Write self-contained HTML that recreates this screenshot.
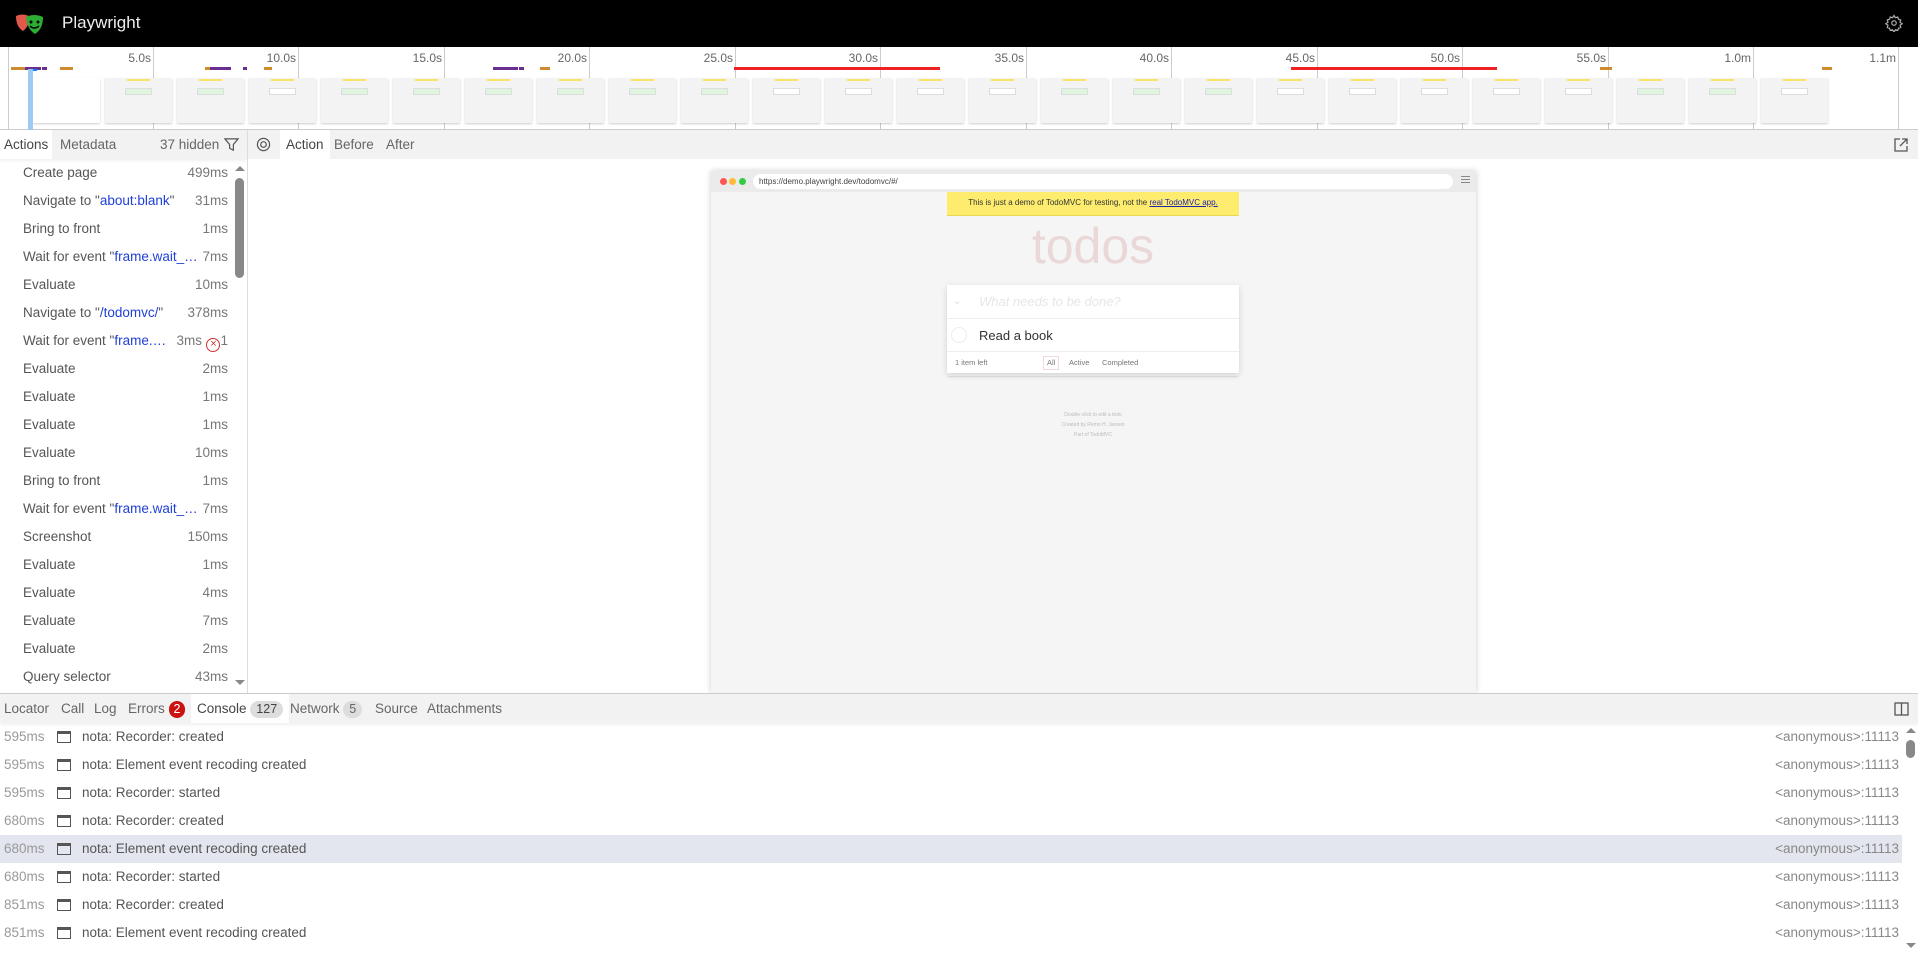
<!DOCTYPE html>
<html><head><meta charset="utf-8"><style>
*{box-sizing:border-box;margin:0;padding:0}
body{width:1918px;height:955px;overflow:hidden;font-family:"Liberation Sans",sans-serif;font-size:13.5px;color:#555;background:#fff;position:relative}
.abs{position:absolute}
#hdr{left:0;top:0;width:1918px;height:47px;background:#000}
#hdr .t{left:62px;top:13px;color:#eee;font-size:17px}
#tl{left:0;top:47px;width:1918px;height:83px;background:#fff;border-bottom:1px solid #ccc}
.tick{top:0;width:1px;height:83px;background:#ccc}
.lbl{top:4px;font-size:12px;color:#666;text-align:right;width:60px}
.bar{height:3px;top:20px}
.th{top:31px;width:67px;height:45px;background:#f3f3f3;box-shadow:0 1px 2px rgba(0,0,0,.2)}
.th i{position:absolute;left:22px;top:1px;width:23px;height:2px;background:#f5e36a}
.th b{position:absolute;left:20px;top:10px;width:27px;height:7px;background:#fff;border:1px solid #ddd}
.tabbar{background:#f2f2f2}
.tab{position:absolute;top:0;height:100%;padding:0 6px;line-height:29px;color:#666}
.tab.sel{background:#fff;color:#444}
.row{position:absolute;left:0;height:28px;line-height:28px;white-space:nowrap}
.row .n{position:absolute;left:23px;color:#555}
.row .d{position:absolute;right:0;color:#777;text-align:right}
.blue{color:#1f3fd9}
.crow{position:absolute;left:0;width:1902px;height:28px;line-height:28px;color:#555}
.crow .ts{position:absolute;left:4px;color:#999}
.crow .ic{position:absolute;left:57px;top:8px;width:14px;height:12px;border:1.5px solid #555;border-top-width:3px}
.crow .m{position:absolute;left:82px}
.crow .s{position:absolute;right:3px;color:#888}
.badge{display:inline-block;border-radius:9px;padding:0 6px;line-height:17px;font-size:12.5px}
</style></head><body>
<div id="hdr" class="abs">
<svg class="abs" style="left:14px;top:12px" width="32" height="24" viewBox="0 0 32 24"><path d="M2 4 Q8 1 15 4 Q16 14 9 19 Q2 15 2 4Z" fill="#e2574c"/><path d="M12 5 Q20 1 29 5 Q29 17 21 22 Q13 17 12 5Z" fill="#2ead33"/><circle cx="17" cy="10" r="1.5" fill="#000"/><circle cx="24" cy="10" r="1.5" fill="#000"/><path d="M16 14 Q20 18 25 14" stroke="#000" stroke-width="1.5" fill="none"/></svg>
<div class="abs t">Playwright</div>
<svg class="abs" style="left:1885px;top:14px" width="18" height="18" viewBox="0 0 24 24" fill="none" stroke="#aaa" stroke-width="1.6"><circle cx="12" cy="12" r="3"/><path d="M12 2l2 3 3-1 1 3 3 1-1 3 3 2-3 2 1 3-3 1-1 3-3-1-2 3-2-3-3 1-1-3-3-1 1-3-3-2 3-2-1-3 3-1 1-3 3 1z"/></svg>
</div>
<div id="tl" class="abs">
<div class="abs tick" style="left:8px"></div>
<div class="abs tick" style="left:153px"></div><div class="abs lbl" style="left:91px">5.0s</div>
<div class="abs tick" style="left:298px"></div><div class="abs lbl" style="left:236px">10.0s</div>
<div class="abs tick" style="left:444px"></div><div class="abs lbl" style="left:382px">15.0s</div>
<div class="abs tick" style="left:589px"></div><div class="abs lbl" style="left:527px">20.0s</div>
<div class="abs tick" style="left:735px"></div><div class="abs lbl" style="left:673px">25.0s</div>
<div class="abs tick" style="left:880px"></div><div class="abs lbl" style="left:818px">30.0s</div>
<div class="abs tick" style="left:1026px"></div><div class="abs lbl" style="left:964px">35.0s</div>
<div class="abs tick" style="left:1171px"></div><div class="abs lbl" style="left:1109px">40.0s</div>
<div class="abs tick" style="left:1317px"></div><div class="abs lbl" style="left:1255px">45.0s</div>
<div class="abs tick" style="left:1462px"></div><div class="abs lbl" style="left:1400px">50.0s</div>
<div class="abs tick" style="left:1608px"></div><div class="abs lbl" style="left:1546px">55.0s</div>
<div class="abs tick" style="left:1753px"></div><div class="abs lbl" style="left:1691px">1.0m</div>
<div class="abs tick" style="left:1898px"></div><div class="abs lbl" style="left:1836px">1.1m</div>
<div class="abs bar" style="left:11px;width:14px;background:#d08a2e"></div>
<div class="abs bar" style="left:25px;width:16px;background:#6b2f8f"></div>
<div class="abs bar" style="left:42px;width:5px;background:#6b2f8f"></div>
<div class="abs bar" style="left:60px;width:13px;background:#d08a2e"></div>
<div class="abs bar" style="left:205px;width:5px;background:#d08a2e"></div>
<div class="abs bar" style="left:210px;width:21px;background:#6b2f8f"></div>
<div class="abs bar" style="left:243px;width:4px;background:#6b2f8f"></div>
<div class="abs bar" style="left:264px;width:8px;background:#d08a2e"></div>
<div class="abs bar" style="left:493px;width:25px;background:#6b2f8f"></div>
<div class="abs bar" style="left:519px;width:5px;background:#6b2f8f"></div>
<div class="abs bar" style="left:540px;width:10px;background:#d08a2e"></div>
<div class="abs bar" style="left:734px;width:206px;background:#e22"></div>
<div class="abs bar" style="left:1291px;width:206px;background:#e22"></div>
<div class="abs bar" style="left:1600px;width:12px;background:#d08a2e"></div>
<div class="abs bar" style="left:1822px;width:10px;background:#d08a2e"></div>
<div class="abs" style="left:30px;top:22px;width:7px;height:2px;background:#0a84ff"></div>
<div class="abs" style="left:33px;top:31px;width:67px;height:45px;background:#fff;box-shadow:0 1px 2px rgba(0,0,0,.2)"></div>
<div class="abs" style="left:28px;top:22px;width:5px;height:61px;background:#9ccaf5"></div>
<div class="abs th" style="left:105px"><i></i><b style="background:#dff5df"></b></div>
<div class="abs th" style="left:177px"><i></i><b style="background:#dff5df"></b></div>
<div class="abs th" style="left:249px"><i></i><b></b></div>
<div class="abs th" style="left:321px"><i></i><b style="background:#dff5df"></b></div>
<div class="abs th" style="left:393px"><i></i><b style="background:#dff5df"></b></div>
<div class="abs th" style="left:465px"><i></i><b style="background:#dff5df"></b></div>
<div class="abs th" style="left:537px"><i></i><b style="background:#dff5df"></b></div>
<div class="abs th" style="left:609px"><i></i><b style="background:#dff5df"></b></div>
<div class="abs th" style="left:681px"><i></i><b style="background:#dff5df"></b></div>
<div class="abs th" style="left:753px"><i></i><b></b></div>
<div class="abs th" style="left:825px"><i></i><b></b></div>
<div class="abs th" style="left:897px"><i></i><b></b></div>
<div class="abs th" style="left:969px"><i></i><b></b></div>
<div class="abs th" style="left:1041px"><i></i><b style="background:#dff5df"></b></div>
<div class="abs th" style="left:1113px"><i></i><b style="background:#dff5df"></b></div>
<div class="abs th" style="left:1185px"><i></i><b style="background:#dff5df"></b></div>
<div class="abs th" style="left:1257px"><i></i><b></b></div>
<div class="abs th" style="left:1329px"><i></i><b></b></div>
<div class="abs th" style="left:1401px"><i></i><b></b></div>
<div class="abs th" style="left:1473px"><i></i><b></b></div>
<div class="abs th" style="left:1545px"><i></i><b></b></div>
<div class="abs th" style="left:1617px"><i></i><b style="background:#dff5df"></b></div>
<div class="abs th" style="left:1689px"><i></i><b style="background:#dff5df"></b></div>
<div class="abs th" style="left:1761px"><i></i><b></b></div>
</div>
<div class="abs tabbar" style="left:0;top:130px;width:247px;height:29px;box-shadow:0 2px 3px rgba(0,0,0,.06)">
<div class="tab sel" style="left:0;padding:0 4px">Actions</div>
<div class="tab" style="left:54px">Metadata</div>
<div class="tab" style="left:154px">37 hidden</div>
<svg class="abs" style="left:224px;top:7px" width="15" height="15" viewBox="0 0 16 16" fill="none" stroke="#555" stroke-width="1.3"><path d="M1 2h14L10 8v6L6 12V8z"/></svg>
</div>
<div class="abs" style="left:247px;top:130px;width:1px;height:563px;background:#ddd"></div>
<div class="abs" style="left:0;top:159px;width:228px;height:534px">
<div class="row" style="top:0;width:228px"><span class="n">Create page</span><span class="d">499ms</span></div>
<div class="row" style="top:28px;width:228px"><span class="n">Navigate to "<span class="blue">about:blank</span>"</span><span class="d">31ms</span></div>
<div class="row" style="top:56px;width:228px"><span class="n">Bring to front</span><span class="d">1ms</span></div>
<div class="row" style="top:84px;width:228px"><span class="n">Wait for event "<span class="blue">frame.wait_…</span></span><span class="d">7ms</span></div>
<div class="row" style="top:112px;width:228px"><span class="n">Evaluate</span><span class="d">10ms</span></div>
<div class="row" style="top:140px;width:228px"><span class="n">Navigate to "<span class="blue">/todomvc/</span>"</span><span class="d">378ms</span></div>
<div class="row" style="top:168px;width:228px"><span class="n">Wait for event "<span class="blue">frame.…</span></span><span class="d" style="right:26px">3ms</span><span class="d"><span style="display:inline-block;width:14px;height:14px;border:1.5px solid #c33;border-radius:50%;color:#c33;font-size:11px;line-height:11px;text-align:center;vertical-align:-2px">×</span>1</span></div>
<div class="row" style="top:196px;width:228px"><span class="n">Evaluate</span><span class="d">2ms</span></div>
<div class="row" style="top:224px;width:228px"><span class="n">Evaluate</span><span class="d">1ms</span></div>
<div class="row" style="top:252px;width:228px"><span class="n">Evaluate</span><span class="d">1ms</span></div>
<div class="row" style="top:280px;width:228px"><span class="n">Evaluate</span><span class="d">10ms</span></div>
<div class="row" style="top:308px;width:228px"><span class="n">Bring to front</span><span class="d">1ms</span></div>
<div class="row" style="top:336px;width:228px"><span class="n">Wait for event "<span class="blue">frame.wait_…</span></span><span class="d">7ms</span></div>
<div class="row" style="top:364px;width:228px"><span class="n">Screenshot</span><span class="d">150ms</span></div>
<div class="row" style="top:392px;width:228px"><span class="n">Evaluate</span><span class="d">1ms</span></div>
<div class="row" style="top:420px;width:228px"><span class="n">Evaluate</span><span class="d">4ms</span></div>
<div class="row" style="top:448px;width:228px"><span class="n">Evaluate</span><span class="d">7ms</span></div>
<div class="row" style="top:476px;width:228px"><span class="n">Evaluate</span><span class="d">2ms</span></div>
<div class="row" style="top:504px;width:228px"><span class="n">Query selector</span><span class="d">43ms</span></div>
</div>
<div class="abs" style="left:235px;top:166px;width:0;height:0;border:5px solid transparent;border-bottom-color:#888;border-top:0"></div>
<div class="abs" style="left:235px;top:178px;width:9px;height:100px;background:#888;border-radius:5px"></div>
<div class="abs" style="left:235px;top:680px;width:0;height:0;border:5px solid transparent;border-top-color:#888;border-bottom:0"></div>
<div class="abs tabbar" style="left:248px;top:130px;width:1670px;height:29px">
<svg class="abs" style="left:8px;top:7px" width="15" height="15" viewBox="0 0 16 16" fill="none" stroke="#555" stroke-width="1.3"><circle cx="8" cy="8" r="6.5"/><circle cx="8" cy="8" r="3"/></svg>
<div class="tab sel" style="left:32px">Action</div>
<div class="tab" style="left:80px">Before</div>
<div class="tab" style="left:132px">After</div>
<svg class="abs" style="left:1645px;top:7px" width="16" height="16" viewBox="0 0 16 16" fill="none" stroke="#555" stroke-width="1.3"><path d="M7 2H2v12h12V9M9 2h5v5M14 2L7 9"/></svg>
</div>
<div class="abs" style="left:711px;top:171px;width:765px;height:522px;background:#f5f5f5;box-shadow:0 0 6px rgba(0,0,0,.2)">
<div class="abs" style="left:0;top:0;width:765px;height:21px;background:#ebebeb"></div>
<div class="abs" style="left:9px;top:7px;width:7px;height:7px;border-radius:50%;background:#f55"></div>
<div class="abs" style="left:18px;top:7px;width:7px;height:7px;border-radius:50%;background:#fb3"></div>
<div class="abs" style="left:28px;top:7px;width:7px;height:7px;border-radius:50%;background:#3c4"></div>
<div class="abs" style="left:42px;top:3px;width:700px;height:15px;background:#fff;border-radius:8px;font-size:8px;line-height:15px;padding-left:6px;color:#444">https://demo.playwright.dev/todomvc/#/</div>
<div class="abs" style="left:750px;top:5px;width:9px;height:1px;background:#888;box-shadow:0 3px #888,0 6px #888"></div>
<div class="abs" style="left:236px;top:21px;width:292px;height:24px;background:#fdec6e;border-bottom:1px solid #e8d750;font-size:8px;text-align:center;line-height:22px;color:#333">This is just a demo of TodoMVC for testing, not the <u style="color:#22a">real TodoMVC app.</u></div>
<div class="abs" style="left:236px;top:46px;width:292px;text-align:center;font-size:50px;color:#ead7d7;font-weight:100">todos</div>
<div class="abs" style="left:236px;top:114px;width:292px;height:88px;background:#fff;box-shadow:0 2px 6px rgba(0,0,0,.15),0 4px 0 -1px #f6f6f6,0 5px 1px -1px #ddd">
<div class="abs" style="left:0;top:0;width:292px;height:34px;border-bottom:1px solid #eee;font-size:13px;font-style:italic;color:#e6e6e6;line-height:34px;padding-left:32px">What needs to be done?</div>
<div class="abs" style="left:6px;top:11px;color:#ddd;font-size:10px">⌄</div>
<div class="abs" style="left:4px;top:42px;width:16px;height:16px;border:1px solid #eee;border-radius:50%"></div>
<div class="abs" style="left:32px;top:35px;font-size:13px;color:#333;line-height:31px">Read a book</div>
<div class="abs" style="left:0;top:66px;width:292px;height:22px;border-top:1px solid #eee;font-size:7.5px;color:#777;line-height:21px">
<span class="abs" style="left:8px">1 item left</span><span class="abs" style="left:96px;top:4px;line-height:12px;padding:0 3px;border:1px solid #f3d9d9">All</span><span class="abs" style="left:122px">Active</span><span class="abs" style="left:155px">Completed</span></div>
</div>
<div class="abs" style="left:236px;top:239px;width:292px;text-align:center;font-size:5px;color:#bbb;line-height:10px">Double-click to edit a todo<br>Created by Remo H. Jansen<br>Part of TodoMVC</div>
</div>
<div class="abs tabbar" style="left:0;top:693px;width:1918px;height:30px;border-top:1px solid #ccc;box-shadow:0 2px 3px rgba(0,0,0,.06)">
<div class="tab" style="left:0;padding:0 4px">Locator</div>
<div class="tab" style="left:55px">Call</div>
<div class="tab" style="left:88px">Log</div>
<div class="tab" style="left:122px">Errors <span class="badge" style="background:#c11;color:#fff;padding:0 5px">2</span></div>
<div class="tab sel" style="left:191px">Console <span class="badge" style="background:#ddd">127</span></div>
<div class="tab" style="left:284px">Network <span class="badge" style="background:#ddd">5</span></div>
<div class="tab" style="left:369px">Source</div>
<div class="tab" style="left:421px">Attachments</div>
<svg class="abs" style="left:1894px;top:8px" width="15" height="14" viewBox="0 0 15 14" fill="none" stroke="#555" stroke-width="1.3"><rect x="1" y="1" width="13" height="12"/><path d="M7.5 1v12"/></svg>
</div>
<div class="abs" style="left:0;top:723px;width:1918px;height:232px;overflow:hidden">
<div class="crow" style="top:0"><span class="ts">595ms</span><span class="ic"></span><span class="m">nota: Recorder: created</span><span class="s">&lt;anonymous&gt;:11113</span></div>
<div class="crow" style="top:28px"><span class="ts">595ms</span><span class="ic"></span><span class="m">nota: Element event recoding created</span><span class="s">&lt;anonymous&gt;:11113</span></div>
<div class="crow" style="top:56px"><span class="ts">595ms</span><span class="ic"></span><span class="m">nota: Recorder: started</span><span class="s">&lt;anonymous&gt;:11113</span></div>
<div class="crow" style="top:84px"><span class="ts">680ms</span><span class="ic"></span><span class="m">nota: Recorder: created</span><span class="s">&lt;anonymous&gt;:11113</span></div>
<div class="crow" style="top:112px;background:#e3e6ef"><span class="ts">680ms</span><span class="ic"></span><span class="m">nota: Element event recoding created</span><span class="s">&lt;anonymous&gt;:11113</span></div>
<div class="crow" style="top:140px"><span class="ts">680ms</span><span class="ic"></span><span class="m">nota: Recorder: started</span><span class="s">&lt;anonymous&gt;:11113</span></div>
<div class="crow" style="top:168px"><span class="ts">851ms</span><span class="ic"></span><span class="m">nota: Recorder: created</span><span class="s">&lt;anonymous&gt;:11113</span></div>
<div class="crow" style="top:196px"><span class="ts">851ms</span><span class="ic"></span><span class="m">nota: Element event recoding created</span><span class="s">&lt;anonymous&gt;:11113</span></div>
<div class="crow" style="top:224px"><span class="ic"></span></div>
</div>
<div class="abs" style="left:1906px;top:728px;border:5px solid transparent;border-bottom-color:#888;border-top:0"></div>
<div class="abs" style="left:1906px;top:740px;width:9px;height:18px;background:#888;border-radius:5px"></div>
<div class="abs" style="left:1906px;top:943px;border:5px solid transparent;border-top-color:#888;border-bottom:0"></div>
</body></html>
